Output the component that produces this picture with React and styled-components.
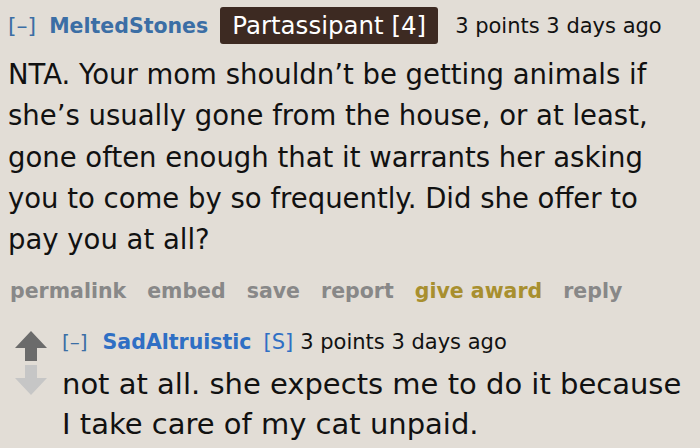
import React from "react";
import styled, { createGlobalStyle } from "styled-components";

const GlobalStyle = createGlobalStyle`
    html, body {
        margin: 0;
        padding: 0;
        background: #e2ddd6;
    }
    body {
        font-family: "DejaVu Sans", Verdana, sans-serif;
        color: #111;
    }
`;

const Page = styled.div`
    width: 700px;
    height: 448px;
    overflow: hidden;
    background: #e2ddd6;
    padding: 7px 0 0 8px;
    box-sizing: border-box;
`;

const HeaderRow = styled.div`
    display: flex;
    align-items: center;
    height: 37px;
`;

const Toggle = styled.span`
    color: #3b6ea5;
    font-size: ${props => props.small ? "20px" : "22px"};
    margin-right: ${props => props.small ? "15px" : "13px"};
`;

const Author = styled.span`
    color: ${props => props.color || "#3b6ea5"};
    font-weight: bold;
    font-size: 20.5px;
`;

const Flair = styled.span`
    display: inline-flex;
    align-items: center;
    height: 37px;
    margin-left: 12px;
    padding: 0 12px;
    background: #3d2a22;
    border-radius: 3px;
    color: #fff;
    font-size: 24.5px;
`;

const Tagline = styled.span`
    margin-left: 17px;
    font-size: 21px;
    color: #111;
`;

const Body = styled.p`
    margin: 10px 0 0 0;
    font-size: 27.5px;
    line-height: 41.3px;
    color: #111;
    white-space: nowrap;
`;

const Line = styled.span`
    display: block;
`;

const Actions = styled.ul`
    display: flex;
    gap: 21px;
    margin: 20px 0 0 0;
    padding: 0 0 0 2px;
    list-style: none;
    height: 22px;
    align-items: center;
`;

const Action = styled.li`
    font-weight: bold;
    font-size: 20.5px;
    color: ${props => props.gold ? "#a88f2f" : "#888"};
`;

const Reply = styled.div`
    display: flex;
    margin-top: 27px;
`;

const Votes = styled.div`
    width: 54px;
    box-sizing: border-box;
    display: flex;
    flex-direction: column;
    align-items: flex-start;
    padding-left: 7px;
    padding-top: 2px;
    gap: 3px;
`;

const ReplyContent = styled.div`
    display: flex;
    flex-direction: column;
`;

const ReplyHeader = styled.div`
    display: flex;
    align-items: center;
    height: 26px;
    font-size: 21px;
`;

const Submitter = styled.span`
    color: #2f6fc4;
    margin: 0 7px 0 12px;
`;

const Plain = styled.span`
    color: #111;
`;

const ReplyBody = styled.p`
    margin: 9px 0 0 0;
    font-size: 29px;
    line-height: 40px;
    color: #111;
    white-space: nowrap;
`;

const Arrow = ({ down, color }) => (
    <svg width="32" height="31" viewBox="0 0 32 31">
        <path
            d={down
                ? "M10 0 H22 V13 H32 L16 30 L0 13 H10 Z"
                : "M16 0 L32 17 H22 V30 H10 V17 H0 Z"}
            fill={color}
        />
    </svg>
);

const bodyLines = [
    "NTA. Your mom shouldn’t be getting animals if",
    "she’s usually gone from the house, or at least,",
    "gone often enough that it warrants her asking",
    "you to come by so frequently. Did she offer to",
    "pay you at all?"
];

const App = () => {
    return (
        <Page>
            <GlobalStyle />
            <HeaderRow>
                <Toggle>[–]</Toggle>
                <Author>MeltedStones</Author>
                <Flair>Partassipant [4]</Flair>
                <Tagline>3 points 3 days ago</Tagline>
            </HeaderRow>
            <Body>
                {bodyLines.map(line => <Line key={line}>{line}</Line>)}
            </Body>
            <Actions>
                <Action>permalink</Action>
                <Action>embed</Action>
                <Action>save</Action>
                <Action>report</Action>
                <Action gold>give award</Action>
                <Action>reply</Action>
            </Actions>
            <Reply>
                <Votes>
                    <Arrow color="#6b6b6b" />
                    <Arrow down color="#c6c6c6" />
                </Votes>
                <ReplyContent>
                    <ReplyHeader>
                        <Toggle small>[–]</Toggle>
                        <Author color="#2f6fc4">SadAltruistic</Author>
                        <Submitter>[S]</Submitter>
                        <Plain>3 points 3 days ago</Plain>
                    </ReplyHeader>
                    <ReplyBody>
                        <Line>not at all. she expects me to do it because</Line>
                        <Line>I take care of my cat unpaid.</Line>
                    </ReplyBody>
                </ReplyContent>
            </Reply>
        </Page>
    );
};

export default App;
